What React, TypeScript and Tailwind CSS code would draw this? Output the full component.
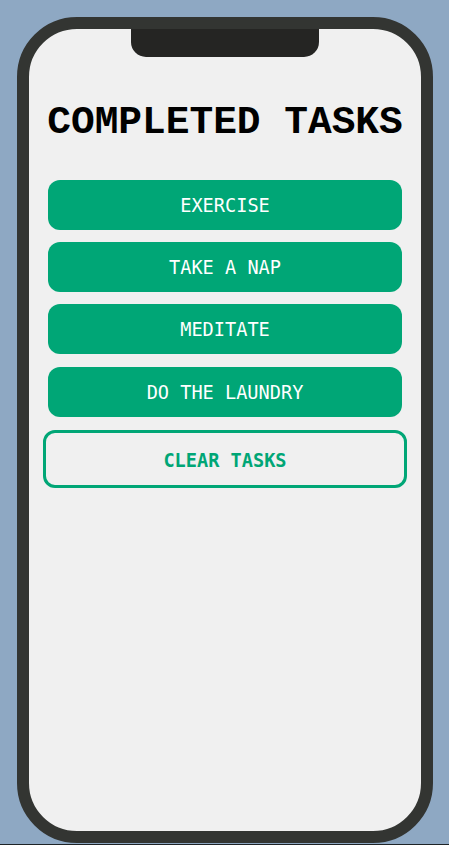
const tasks = ["EXERCISE", "TAKE A NAP", "MEDITATE", "DO THE LAUNDRY"];

export default function App() {
  return (
    <div className="min-h-[845px] bg-[#8ea8c3] pt-[17px] overflow-hidden" style={{ fontFamily: "'Liberation Mono', 'DejaVu Sans Mono', monospace" }}>
      <div className="ml-[17px] w-[416px] h-[826px] rounded-[60px] border-[12px] border-[#333532] bg-[#f0f0f0] overflow-hidden flex flex-col items-center">
        <div className="w-[188px] h-[28px] bg-[#252523] rounded-b-[15px] shrink-0" />
        <h1 className="mt-[46px] text-[39.5px] leading-none font-bold text-black">COMPLETED TASKS</h1>
        <div className="mt-[37px] w-full px-[19px] flex flex-col gap-[12.4px]" style={{ fontFamily: "'DejaVu Sans Mono', monospace" }}>
          {tasks.map((t) => (
            <button key={t} className="h-[50px] w-full rounded-[12px] bg-[#00a676] text-white text-[18.6px] leading-none flex items-center justify-center pt-[3px]">
              {t}
            </button>
          ))}
          <button className="mt-px -mx-[5px] h-[58px] rounded-[12px] border-[3px] border-[#00a676] text-[#00a676] font-bold text-[18.6px] leading-none flex items-center justify-center pt-[5px]">
            CLEAR TASKS
          </button>
        </div>
      </div>
      <div className="mt-px h-px bg-[#1e2326]" />
    </div>
  );
}
